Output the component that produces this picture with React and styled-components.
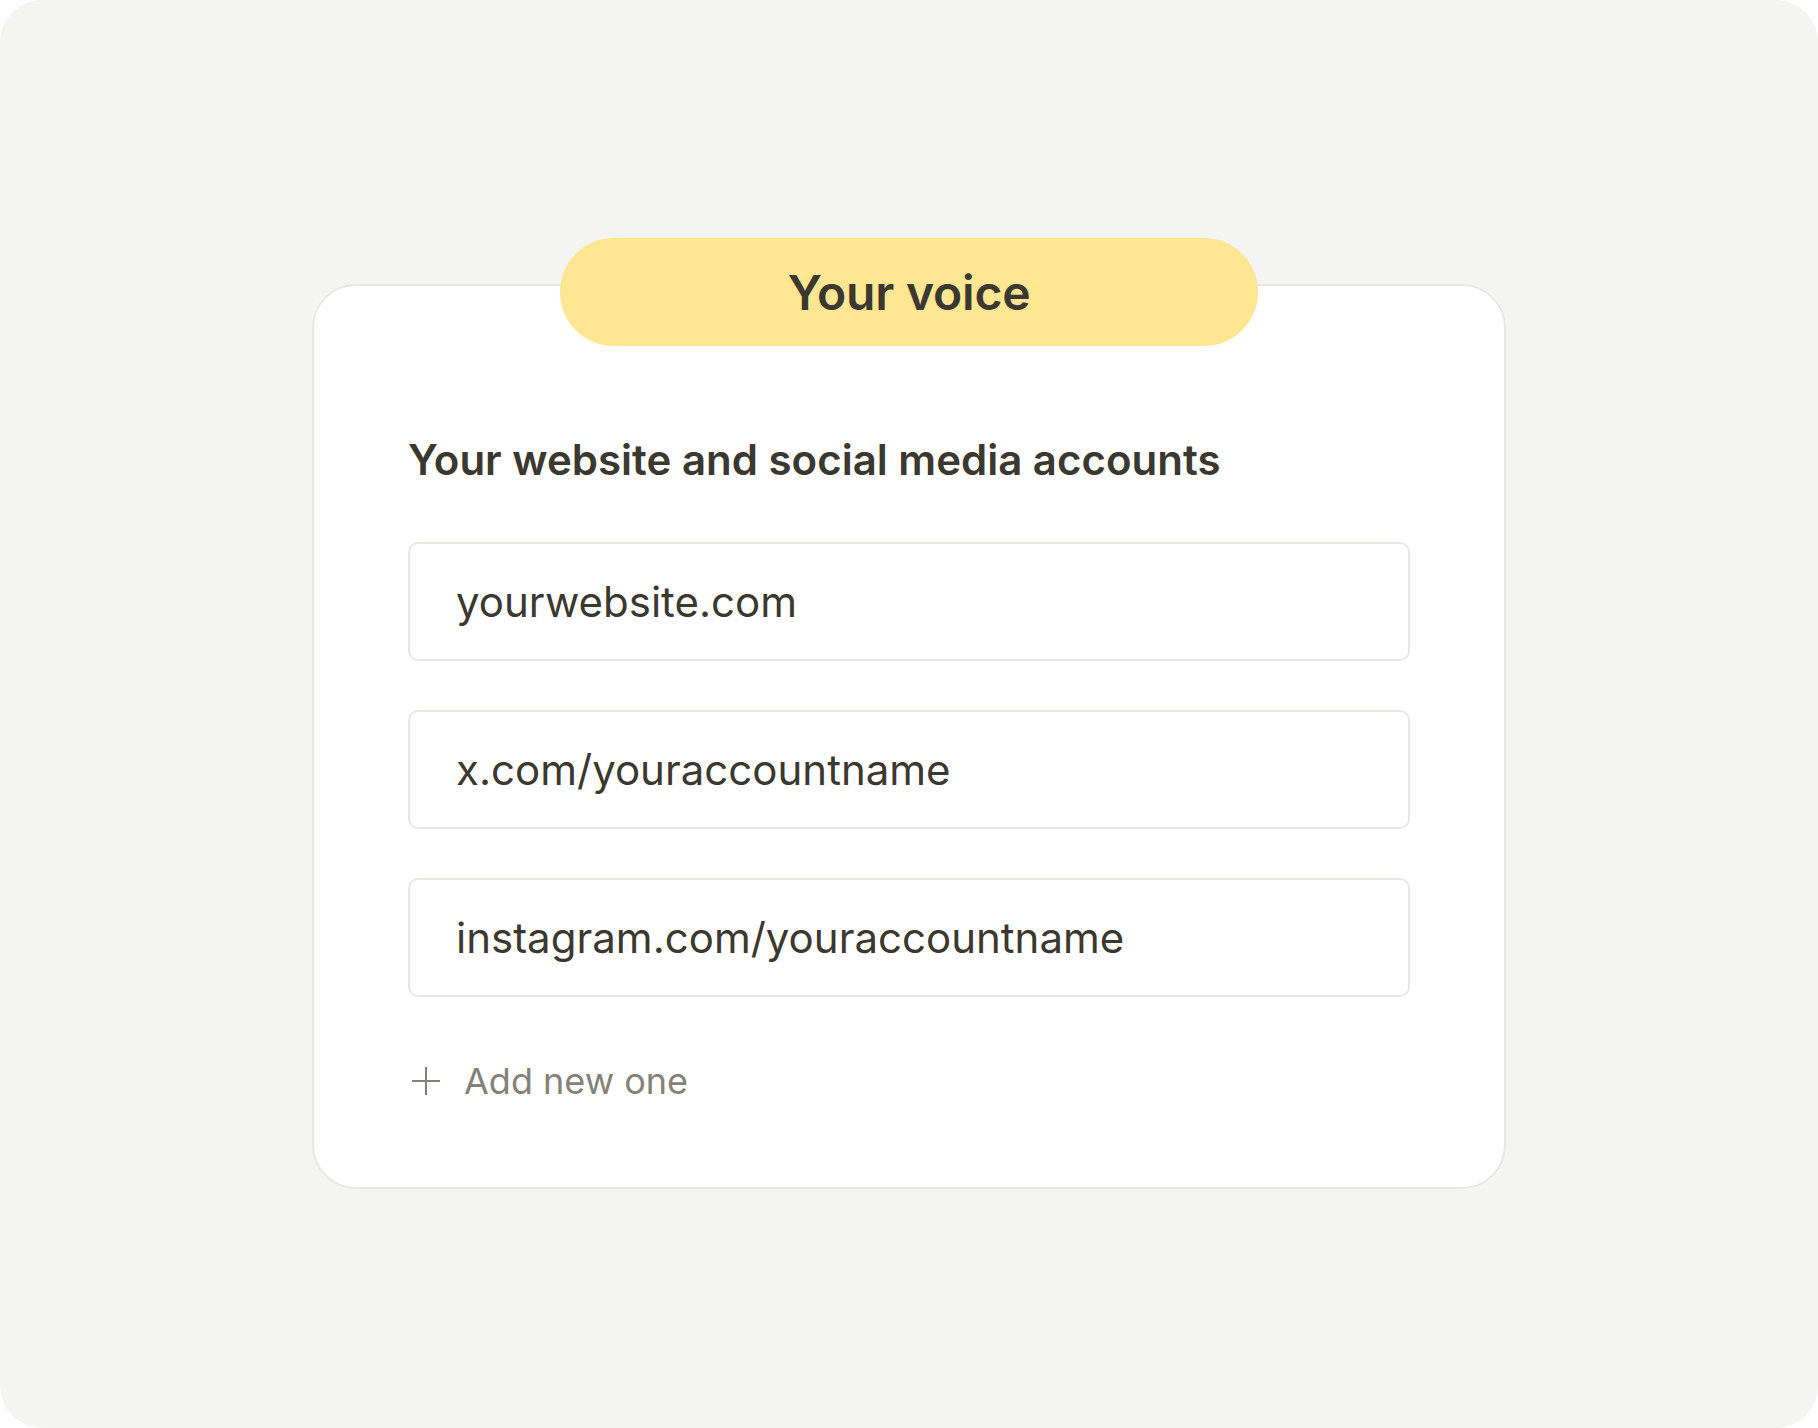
import React from "react";
import styled, { createGlobalStyle } from "styled-components";

const GlobalStyle = createGlobalStyle`
  html, body {
    margin: 0;
    padding: 0;
    background: #ffffff;
  }
  body {
    font-family: Inter, "Noto Sans", "Liberation Sans", sans-serif;
    -webkit-font-smoothing: antialiased;
  }
`;

const Frame = styled.div`
  width: 1818px;
  height: 1428px;
  box-sizing: border-box;
  background: #f4f4f2;
  border-radius: 42px;
  display: flex;
  justify-content: center;
  align-items: flex-start;
  padding-top: 284px;
`;

const Card = styled.section`
  position: relative;
  width: 1194px;
  box-sizing: border-box;
  background: #ffffff;
  border: 2px solid #e7e7e5;
  border-radius: 44px;
  padding: 149px 94px 84px;
  display: flex;
  flex-direction: column;
`;

const Badge = styled.div`
  position: absolute;
  top: -48px;
  left: 50%;
  transform: translateX(-50%);
  width: 698px;
  height: 108px;
  border-radius: 54px;
  background: #ffe693;
  display: flex;
  align-items: center;
  justify-content: center;
  font-size: 48px;
  font-weight: 600;
  color: #3b382f;
  letter-spacing: -0.2px;
`;

const Heading = styled.h2`
  margin: 0;
  font-size: 42px;
  line-height: 50px;
  font-weight: 600;
  color: #3b382f;
`;

const Fields = styled.div`
  display: flex;
  flex-direction: column;
  gap: 49px;
  margin-top: 57px;
`;

const Field = styled.div`
  height: 119px;
  box-sizing: border-box;
  border: 2px solid #e7e7e5;
  border-radius: 10px;
  padding: 0 46px;
  display: flex;
  align-items: center;
  font-size: 42px;
  line-height: 50px;
  font-weight: 400;
  color: #3b382f;
`;

const AddRow = styled.button`
  margin-top: 62px;
  align-self: flex-start;
  display: flex;
  align-items: center;
  gap: 24px;
  padding: 0 0 0 4px;
  border: none;
  background: none;
  font-family: inherit;
  font-size: 36px;
  line-height: 44px;
  font-weight: 400;
  color: #858178;
  cursor: pointer;
`;

const PlusIcon = () => (
  <svg width="28" height="28" viewBox="0 0 28 28" fill="none">
    <path d="M14 0V28M0 14H28" stroke="#858178" strokeWidth="2" />
  </svg>
);

export default function App() {
  const fields = [
    "yourwebsite.com",
    "x.com/youraccountname",
    "instagram.com/youraccountname",
  ];
  return (
    <>
      <GlobalStyle />
      <Frame>
        <Card>
          <Badge>Your voice</Badge>
          <Heading>Your website and social media accounts</Heading>
          <Fields>
            {fields.map((f) => (
              <Field key={f}>{f}</Field>
            ))}
          </Fields>
          <AddRow type="button">
            <PlusIcon />
            Add new one
          </AddRow>
        </Card>
      </Frame>
    </>
  );
}
